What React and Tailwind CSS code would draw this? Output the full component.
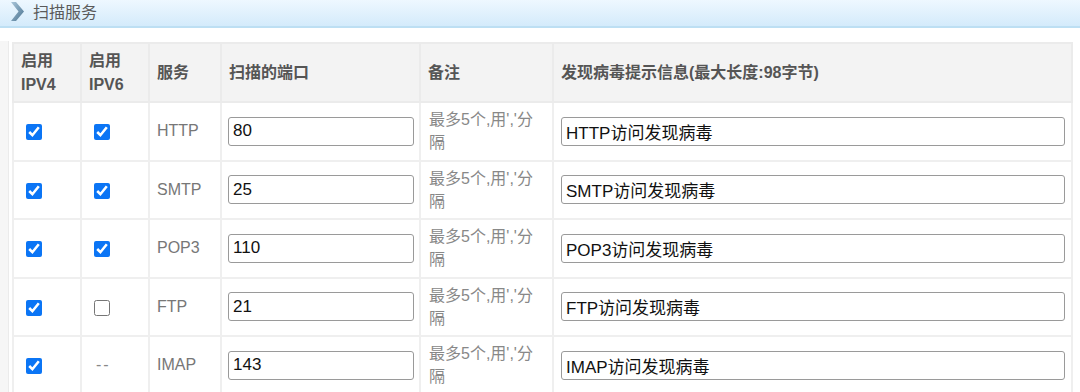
import React from 'react';

const rows = [
    { v4: true, v6: true, name: 'HTTP', port: '80', msg: 'HTTP访问发现病毒' },
    { v4: true, v6: true, name: 'SMTP', port: '25', msg: 'SMTP访问发现病毒' },
    { v4: true, v6: true, name: 'POP3', port: '110', msg: 'POP3访问发现病毒' },
    { v4: true, v6: false, name: 'FTP', port: '21', msg: 'FTP访问发现病毒' },
    { v4: true, v6: null, name: 'IMAP', port: '143', msg: 'IMAP访问发现病毒' },
];

// chevron in the section title bar
const Chevron = () => (
    <svg width="15" height="21" viewBox="0 0 15 21" className="shrink-0 -mt-[3px]">
        <defs>
            <linearGradient id="chev" x1="0" y1="0" x2="1" y2="1">
                <stop offset="0" stopColor="#a9c6da" />
                <stop offset="1" stopColor="#4a7390" />
            </linearGradient>
        </defs>
        <path d="M1 1 L6 1 L14 10.5 L6 20 L1 20 L8.5 10.5 Z" fill="url(#chev)" />
    </svg>
);

const Check = ({ checked }) => (
    <input
        type="checkbox"
        defaultChecked={checked}
        className="w-[16px] h-[16px] m-0 align-middle accent-[#0b75f5]"
    />
);

export default function App() {
    return (
        <div
            className="w-[1080px] h-[392px] overflow-hidden bg-white"
            style={{ fontFamily: '"Liberation Sans", "Noto Sans CJK SC", sans-serif' }}
        >
            <div className="h-[28px] flex items-center gap-[8px] pl-[10px] bg-gradient-to-b from-[#eef8ff] to-[#d4ebfb] border-b-2 border-[#bddff3]">
                <Chevron />
                <span className="text-[16px] leading-none text-[#5a5a5a]">扫描服务</span>
            </div>
            <div className="flex h-full">
                <div className="w-[9px] bg-[#f6f6f6] border-r border-[#ebebeb] mt-[13px]" />
                <div className="pl-[3px] pt-[14px]">
                    <table className="w-[1061px] border-collapse table-fixed text-[16px]">
                        <colgroup>
                            <col className="w-[68px]" />
                            <col className="w-[68px]" />
                            <col className="w-[72px]" />
                            <col className="w-[199px]" />
                            <col className="w-[133px]" />
                            <col />
                        </colgroup>
                        <thead>
                            <tr className="h-[59px] bg-[#f3f3f3] text-[#555] text-left leading-[24px]">
                                <th className="border-2 border-[#ebebeb] px-[7px] font-bold">启用<br />IPV4</th>
                                <th className="border-2 border-[#ebebeb] px-[7px] font-bold">启用<br />IPV6</th>
                                <th className="border-2 border-[#ebebeb] px-[7px] font-bold">服务</th>
                                <th className="border-2 border-[#ebebeb] px-[7px] font-bold">扫描的端口</th>
                                <th className="border-2 border-[#ebebeb] px-[7px] font-bold">备注</th>
                                <th className="border-2 border-[#ebebeb] px-[7px] font-bold">发现病毒提示信息(最大长度:98字节)</th>
                            </tr>
                        </thead>
                        <tbody>
                            {rows.map((r) => (
                                <tr key={r.name} className="h-[58.5px]">
                                    <td className="border-2 border-[#efefef] px-[12px]">
                                        <Check checked={r.v4} />
                                    </td>
                                    <td className="border-2 border-[#efefef] px-[12px] text-[#888]">
                                        {r.v6 === null ? <span className="pl-[2px] tracking-[2px]">--</span> : <Check checked={r.v6} />}
                                    </td>
                                    <td className="border-2 border-[#efefef] px-[7px] text-[#777]">{r.name}</td>
                                    <td className="border-2 border-[#efefef] px-[6px]">
                                        <input
                                            type="text"
                                            defaultValue={r.port}
                                            className="w-[186px] h-[29px] px-[4px] text-[17px] text-[#111] border border-[#9a9a9a] rounded-[3px] outline-none"
                                        />
                                    </td>
                                    <td className="border-2 border-[#efefef] px-[8px] text-[#888] leading-[23px]">最多5个,用','分隔</td>
                                    <td className="border-2 border-[#efefef] px-[7px]">
                                        <input
                                            type="text"
                                            defaultValue={r.msg}
                                            className="w-[504px] h-[29px] px-[4px] text-[17px] text-[#111] border border-[#9a9a9a] rounded-[3px] outline-none"
                                        />
                                    </td>
                                </tr>
                            ))}
                        </tbody>
                    </table>
                </div>
            </div>
        </div>
    );
}
